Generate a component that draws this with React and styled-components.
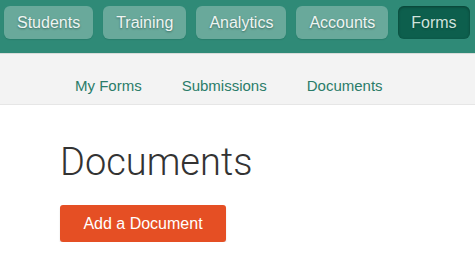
import React from "react";
import styled, { createGlobalStyle } from "styled-components";

const Global = createGlobalStyle`
  html, body { margin: 0; padding: 0; background: #fff; }
  body { font-family: "Liberation Sans", Arial, sans-serif; }
`;

const TopBar = styled.nav`
  display: flex;
  align-items: flex-start;
  gap: 10px;
  height: 53px;
  padding: 6px 4px 0;
  box-sizing: border-box;
  background: #2f8a77;
`;

const TopButton = styled.a`
  display: flex;
  align-items: center;
  justify-content: center;
  height: 33px;
  padding: 0 ${(p) => p.$pad || 13}px;
  border-radius: 6px;
  box-sizing: border-box;
  font-size: 16px;
  color: ${(p) => (p.$active ? "#cfe3dd" : "#eef4f2")};
  text-shadow: 0 1px 2px rgba(0, 40, 30, 0.45);
  background: ${(p) => (p.$active ? "#0d5f4d" : "#69a99b")};
  box-shadow: ${(p) =>
    p.$active
      ? "inset 0 1px 3px rgba(0,0,0,0.35)"
      : "0 1px 1px rgba(0,60,45,0.15)"};
  text-decoration: none;
  cursor: pointer;
`;

const SubNav = styled.nav`
  display: flex;
  align-items: center;
  height: 52px;
  padding-left: 55px;
  box-sizing: border-box;
  background: #f3f3f3;
  border-top: 1px solid #d8dcda;
  border-bottom: 1px solid #e6e6e6;
`;

const SubLink = styled.a`
  padding: 13px 20px 0;
  font-size: 15px;
  color: #2a7c69;
  text-decoration: none;
`;

const Content = styled.main`
  padding: 35px 60px 0;
`;

const Heading = styled.h1`
  margin: 0;
  font-family: Roboto, "Liberation Sans", sans-serif;
  font-weight: 300;
  font-size: 38px;
  line-height: 44px;
  color: #333;
`;

const PrimaryButton = styled.button`
  margin-top: 21px;
  width: 166px;
  height: 37px;
  border: none;
  border-radius: 3px;
  background: #e54f24;
  color: #fff;
  font-family: "Liberation Sans", Arial, sans-serif;
  font-size: 16px;
  box-shadow: 0 2px 2px rgba(0, 0, 0, 0.12);
  cursor: pointer;
`;

const topItems = [
  { label: "Students" },
  { label: "Training" },
  { label: "Analytics" },
  { label: "Accounts" },
  { label: "Forms", active: true },
];

export default function App() {
  return (
    <>
      <Global />
      <TopBar>
        {topItems.map((it) => (
          <TopButton key={it.label} $active={it.active}>
            {it.label}
          </TopButton>
        ))}
      </TopBar>
      <SubNav>
        <SubLink>My Forms</SubLink>
        <SubLink>Submissions</SubLink>
        <SubLink>Documents</SubLink>
      </SubNav>
      <Content>
        <Heading>Documents</Heading>
        <PrimaryButton>Add a Document</PrimaryButton>
      </Content>
    </>
  );
}
